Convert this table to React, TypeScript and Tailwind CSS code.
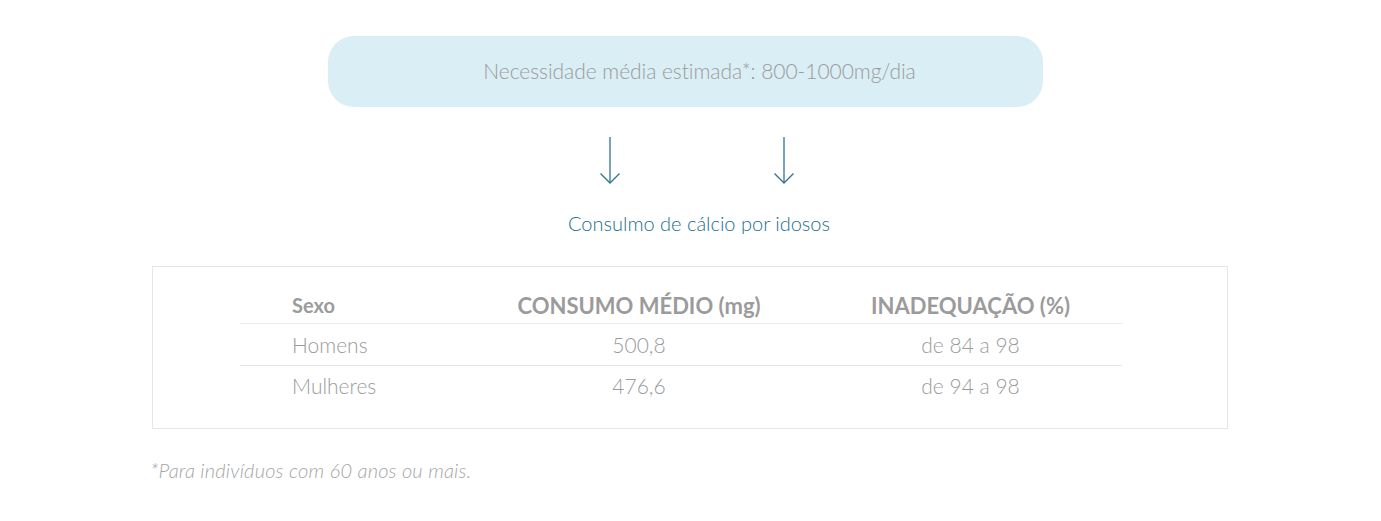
import React from "react";

const Arrow = () => (
  <svg width="22" height="48" viewBox="0 0 22 48" fill="none">
    <path d="M11 0 V46" stroke="#2f7391" strokeWidth="1.3" />
    <path d="M1.5 36.5 L11 46 L20.5 36.5" stroke="#2f7391" strokeWidth="1.3" />
  </svg>
);

export default function App() {
  return (
    <div
      className="w-[1381px] h-[521px] bg-white flex flex-col items-center"
      style={{ fontFamily: "Lato, 'Noto Sans', sans-serif" }}
    >
      <div className="mt-[36px] mr-[10px] w-[715px] h-[71px] rounded-[26px] bg-[#daeef5] flex items-center justify-center">
        <span className="text-[21px] font-light text-[#9a9a9a] tracking-[-0.05px] pb-[1px] pl-[28px]">
          Necessidade média estimada*: 800-1000mg/dia
        </span>
      </div>
      <div className="mt-[30px] flex gap-[152px] pl-[13px]">
        <Arrow />
        <Arrow />
      </div>
      <div className="mt-[23px] text-[20px] font-light text-[#216e8d] leading-[30px] pl-[17px]">
        Consulmo de cálcio por idosos
      </div>
      <div className="mt-[28px] mr-[2px] w-[1076px] h-[163px] border border-[#e6e6e6] flex justify-center pr-[17px]">
        <div className="w-[882px] pt-[20px]">
          <div className="grid grid-cols-[219px_360px_303px] text-[22px] font-bold text-[#9b9b9b] h-[37px] items-center border-b border-[#ececec]">
            <div className="pl-[52px] text-[20px]">Sexo</div>
            <div className="text-center">CONSUMO MÉDIO (mg)</div>
            <div className="text-center">INADEQUAÇÃO (%)</div>
          </div>
          <div className="grid grid-cols-[219px_360px_303px] text-[21px] font-light text-[#9b9b9b] h-[42px] items-center border-b border-[#e6e6e6]">
            <div className="pl-[52px]">Homens</div>
            <div className="text-center">500,8</div>
            <div className="text-center">de 84 a 98</div>
          </div>
          <div className="grid grid-cols-[219px_360px_303px] text-[21px] font-light text-[#9b9b9b] h-[40px] items-center">
            <div className="pl-[52px]">Mulheres</div>
            <div className="text-center">476,6</div>
            <div className="text-center">de 94 a 98</div>
          </div>
        </div>
      </div>
      <div className="w-[1076px] mr-[4px] mt-[26px] text-[20px] italic font-light text-[#a5a5a5] tracking-[0.2px]">
        *Para indivíduos com 60 anos ou mais.
      </div>
    </div>
  );
}
